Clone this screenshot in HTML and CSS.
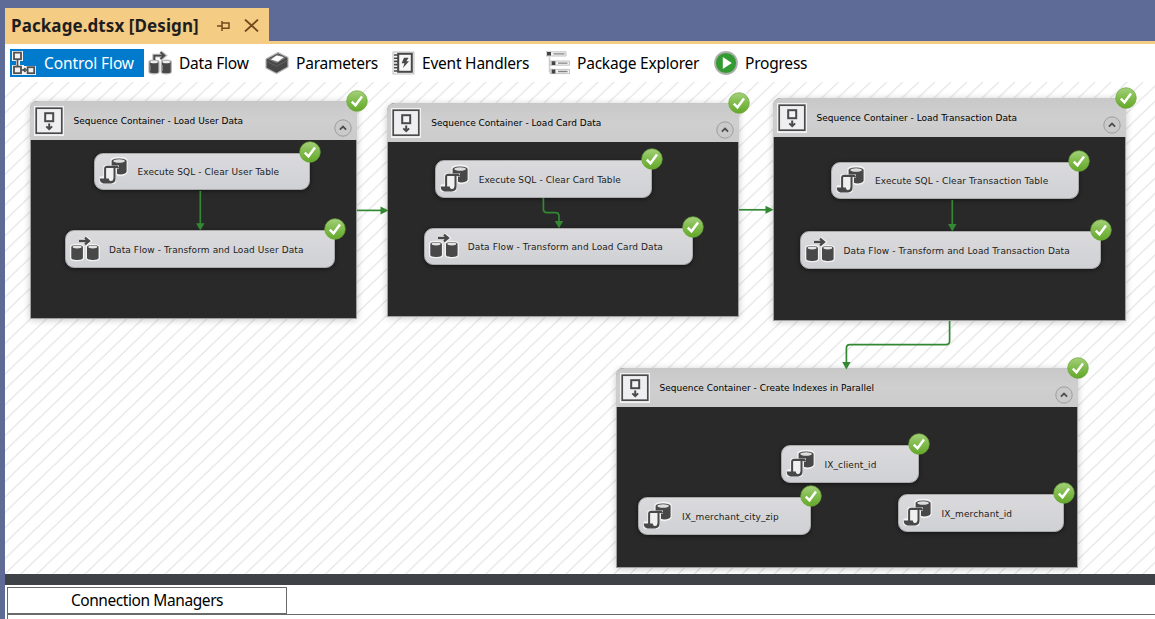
FILE: index.html
```html
<!DOCTYPE html>
<html lang="en">
<head>
<meta charset="utf-8">
<title>Package.dtsx [Design]</title>
<link rel="stylesheet" href="styles.css">
</head>
<body>
<svg class="defs" width="0" height="0" aria-hidden="true">
  <defs>
    <linearGradient id="greenFill" x1="0" y1="0" x2="0" y2="1">
      <stop offset="0" stop-color="#a5d07c"/><stop offset=".45" stop-color="#83bd4f"/><stop offset="1" stop-color="#64a82a"/>
    </linearGradient>
    <symbol id="check" viewBox="0 0 22 22">
      <circle cx="11" cy="11" r="10.3" fill="url(#greenFill)" stroke="#68a536" stroke-width=".7"/>
      <path d="M5.8 11.6L9.5 15.3L16 6.6" fill="none" stroke="#fff" stroke-width="2.5"/>
    </symbol>
    <symbol id="sequence" viewBox="0 0 30 30">
      <rect x="0" y="0" width="30" height="30" fill="#f2f2f4"/>
      <rect x="2.2" y="2.2" width="25.6" height="25" fill="#efeff1" stroke="#4a4a4a" stroke-width="1.7"/>
      <rect x="11.2" y="7.2" width="8" height="8" fill="#f3f3f5" stroke="#4a4a4a" stroke-width="2"/>
      <path d="M15.2 17.6V23M12.3 20.4L15.2 23.2L18.1 20.4" fill="none" stroke="#4a4a4a" stroke-width="2"/>
    </symbol>
    <symbol id="sql" viewBox="0 0 30 30">
      <g fill="#f3f3f3" stroke="#f3f3f3" stroke-width="3.4" stroke-linejoin="round">
        <path d="M13 4.6C13 1.8 27 1.8 27 4.6V16C25 19 20 18.6 19 18V12H13Z"/>
        <path d="M6 11H18V13H15V26H2V22H6Z"/>
      </g>
      <path d="M12.6 5C12.6 1.6 27.6 1.6 27.6 5V15.8C26.6 18.6 20.5 19.2 18 17.8V13H20V9.4H12.6Z" fill="#484848"/>
      <ellipse cx="20.1" cy="5" rx="5.8" ry="1.7" fill="#dedede"/>
      <path d="M6.2 23.4V12.8Q6.2 10.8 8.4 10.8H17.4Q19 10.8 19 12.6M15.4 12V22.4Q15.4 26 12 26.2" fill="none" stroke="#484848" stroke-width="2.2"/>
      <path d="M7.4 12H14.3V22.6H7.4Z" fill="#f0f0f0"/>
      <path d="M0.8 22.6H9.8Q9.8 25 12.8 25.6L12.4 27.4H4.4Q0.8 27 0.8 22.6Z" fill="#484848"/>
    </symbol>
    <symbol id="cylinders" viewBox="0 0 30 26">
      <g stroke="#f2f2f2" stroke-width="2.6" fill="#f2f2f2">
        <path d="M1.3 11C1.3 8.5 12.9 8.5 12.9 11V22C12.9 24.6 1.3 24.6 1.3 22Z"/>
        <path d="M17 11C17 8.5 28.6 8.5 28.6 11V22C28.6 24.6 17 24.6 17 22Z"/>
        <path d="M9 5H19M15 1.8L19 5L15 8.2" fill="none" stroke-width="4.6"/>
      </g>
      <path d="M1.3 11C1.3 8.3 12.9 8.3 12.9 11V22C12.9 24.6 1.3 24.6 1.3 22ZM17 11C17 8.3 28.6 8.3 28.6 11V22C28.6 24.6 17 24.6 17 22Z" fill="#484848"/>
      <ellipse cx="7.1" cy="11" rx="4.5" ry="1.4" fill="#e4e4e4"/>
      <ellipse cx="22.8" cy="11" rx="4.5" ry="1.4" fill="#e4e4e4"/>
      <path d="M9 5H19M15 1.6L19 5L15 8.4" fill="none" stroke="#484848" stroke-width="2.3"/>
    </symbol>
    <symbol id="collapse" viewBox="0 0 18 18">
      <circle cx="9" cy="9" r="8.2" fill="#cacaca" stroke="#979797" stroke-width=".9"/>
      <path d="M5.9 10.6L9 7.6L12.1 10.6" fill="none" stroke="#4d4d4d" stroke-width="1.8"/>
    </symbol>
  </defs>
</svg>

<div class="window">
  <header class="tabstrip">
    <div class="doc-tab">
      <span class="doc-title">Package.dtsx [Design]</span>
      <svg class="pin" viewBox="0 0 13 10"><path d="M0 5H5M5 0V10M5 2H12V7.4M5 7.2H12.6" fill="none" stroke="#75481c" stroke-width="1.5"/></svg>
      <svg class="close" viewBox="0 0 15 13"><path d="M1 .6L14 12.4M14 .6L1 12.4" fill="none" stroke="#75481c" stroke-width="1.9"/></svg>
    </div>
  </header>

  <main class="designer">
    <nav class="views">
      <a class="view active">
        <svg viewBox="0 0 24 24">
          <path d="M0 0H11V10H8V14H12V15H24V24H0V14H4V10H0Z" fill="#f5f5f5"/>
          <g fill="#f0f0f0" stroke="#505050" stroke-width="1.8"><rect x="2" y="1.6" width="7" height="6.6"/><rect x="2" y="15.6" width="7" height="6.6"/><rect x="15.6" y="16.2" width="6.6" height="6"/></g>
          <path d="M5.5 8V15M9 19H15.5M13.5 17L11.5 19L13.5 21" fill="none" stroke="#505050" stroke-width="1.7"/>
        </svg>
        <span>Control Flow</span>
      </a>
      <a class="view">
        <svg viewBox="0 0 24 24">
          <g stroke="#b9b9b9" stroke-width="1.2" fill="#484848">
            <path d="M1 11C1 8.6 11 8.6 11 11V21C11 23.4 1 23.4 1 21ZM13.3 11C13.3 8.6 23.3 8.6 23.3 11V21C23.3 23.4 13.3 23.4 13.3 21Z"/>
          </g>
          <path d="M2 14V20M14.3 14V20" stroke="#888" stroke-width="1.2"/>
          <ellipse cx="6" cy="11" rx="4" ry="1.3" fill="#eee"/><ellipse cx="18.3" cy="11" rx="4" ry="1.3" fill="#eee"/>
          <path d="M6 9V4.6H16M12.5 .8L17 4.6L12.5 8.4" fill="none" stroke="#c3c3c3" stroke-width="3.6"/>
          <path d="M6.3 9V4.6H16M12.5 1.2L16.4 4.6L12.5 8" fill="none" stroke="#484848" stroke-width="1.9"/>
        </svg>
        <span>Data Flow</span>
      </a>
      <a class="view">
        <svg viewBox="0 0 24 24">
          <path d="M1 8L13 1.6L23 6.5V16L11.5 22.5L1 17Z" fill="#484848" stroke="#b5b5b5" stroke-width="1.2" stroke-linejoin="round"/>
          <path d="M3 8.4L13 3.2L21 7L11.6 12.2Z" fill="#777"/>
          <path d="M6 8.4L11.6 4.4L18.8 6L13 10.8Z" fill="#fff"/>
          <path d="M1.6 10.4L11.5 15.2L22.5 9.4" fill="none" stroke="#636363" stroke-width="1"/>
        </svg>
        <span>Parameters</span>
      </a>
      <a class="view">
        <svg viewBox="0 0 24 24">
          <rect x="2" y="1" width="21" height="22" fill="#f4f4f4" stroke="#c2c2c2"/>
          <rect x="7.2" y="2.8" width="13.6" height="18" fill="#f6f6f6" stroke="#484848" stroke-width="2"/>
          <path d="M3 4H7M3 7.2H7M3 10.4H7M3 13.6H7M3 16.8H7M3 20H7" stroke="#484848" stroke-width="1.6"/>
          <path d="M13 6.8H17.6L15.4 10.2H18L12 17L13.4 12.2H10.6Z" fill="#484848"/>
        </svg>
        <span>Event Handlers</span>
      </a>
      <a class="view">
        <svg viewBox="0 0 24 24">
          <path d="M3.5 6V21M3.5 12H7M3.5 20.5H7" stroke="#cfcfcf" stroke-width="1.5" fill="none"/>
          <path d="M0 .8H20V5H0ZM4 10H23.5V14.2H4ZM4 18.4H23.5V22.6H4Z" fill="#f2f2f2" stroke="#bdbdbd" stroke-width=".9"/>
          <path d="M1 1H5V4.6H1ZM5.6 10.2H9.4V14H5.6ZM5.6 18.6H9.4V22.4H5.6Z" fill="#444"/>
          <path d="M7.5 2.9H18.5M12 12.1H21.5M12 20.5H21.5" stroke="#848484" stroke-width="1.4"/>
        </svg>
        <span>Package Explorer</span>
      </a>
      <a class="view">
        <svg viewBox="0 0 24 24">
          <circle cx="12" cy="12" r="11" fill="#349b32" stroke="#adb0ad" stroke-width="1.8"/>
          <path d="M8.8 6L17.8 12L8.8 18Z" fill="#fff"/>
        </svg>
        <span>Progress</span>
      </a>
    </nav>

    <section class="canvas">
      <svg class="hatch" width="1150" height="492">
        <defs><pattern id="stripes" width="16.03" height="15.37" patternUnits="userSpaceOnUse">
          <path d="M-1 16.33L17.03 -.96M-1 .96L1 -.96M15.03 16.33L17.03 14.41" stroke="#e2e2e2" stroke-width="1.2"/>
        </pattern></defs>
        <rect width="1150" height="492" fill="url(#stripes)"/>
      </svg>

      <div class="container user">
        <div class="head"><svg class="seq"><use href="#sequence"/></svg><span>Sequence Container - Load User Data</span><svg class="fold"><use href="#collapse"/></svg></div>
        <svg class="badge"><use href="#check"/></svg>
      </div>
      <div class="container card">
        <div class="head"><svg class="seq"><use href="#sequence"/></svg><span>Sequence Container - Load Card Data</span><svg class="fold"><use href="#collapse"/></svg></div>
        <svg class="badge"><use href="#check"/></svg>
      </div>
      <div class="container transaction">
        <div class="head"><svg class="seq"><use href="#sequence"/></svg><span>Sequence Container - Load Transaction Data</span><svg class="fold"><use href="#collapse"/></svg></div>
        <svg class="badge"><use href="#check"/></svg>
      </div>
      <div class="container indexes">
        <div class="head"><svg class="seq"><use href="#sequence"/></svg><span>Sequence Container - Create Indexes in Parallel</span><svg class="fold"><use href="#collapse"/></svg></div>
        <svg class="badge"><use href="#check"/></svg>
      </div>

      <div class="task user-sql"><svg class="glyph"><use href="#sql"/></svg><span>Execute SQL - Clear User Table</span><svg class="badge"><use href="#check"/></svg></div>
      <div class="task user-flow"><svg class="glyph"><use href="#cylinders"/></svg><span>Data Flow - Transform and Load User Data</span><svg class="badge"><use href="#check"/></svg></div>
      <div class="task card-sql"><svg class="glyph"><use href="#sql"/></svg><span>Execute SQL - Clear Card Table</span><svg class="badge"><use href="#check"/></svg></div>
      <div class="task card-flow"><svg class="glyph"><use href="#cylinders"/></svg><span>Data Flow - Transform and Load Card Data</span><svg class="badge"><use href="#check"/></svg></div>
      <div class="task trans-sql"><svg class="glyph"><use href="#sql"/></svg><span>Execute SQL - Clear Transaction Table</span><svg class="badge"><use href="#check"/></svg></div>
      <div class="task trans-flow"><svg class="glyph"><use href="#cylinders"/></svg><span>Data Flow - Transform and Load Transaction Data</span><svg class="badge"><use href="#check"/></svg></div>
      <div class="task ix-client"><svg class="glyph"><use href="#sql"/></svg><span>IX_client_id</span><svg class="badge"><use href="#check"/></svg></div>
      <div class="task ix-zip"><svg class="glyph"><use href="#sql"/></svg><span>IX_merchant_city_zip</span><svg class="badge"><use href="#check"/></svg></div>
      <div class="task ix-merchant"><svg class="glyph"><use href="#sql"/></svg><span>IX_merchant_id</span><svg class="badge"><use href="#check"/></svg></div>

      <svg class="edges" width="1150" height="492" viewBox="5 82 1150 492">
        <g fill="none" stroke="#338833" stroke-width="1.7">
          <path d="M200.3 191V224"/>
          <path d="M357 210.4H381"/>
          <path d="M739 209.8H766"/>
          <path d="M543.4 198V209Q543.4 212.6 547 212.6H555.4Q559 212.6 559 216.2V222"/>
          <path d="M952.3 200V225"/>
          <path d="M949.6 321V341Q949.6 344.6 946 344.6H850Q846.4 344.6 846.4 348.2V363"/>
        </g>
        <g fill="#338833">
          <path d="M196.1 223.3H204.5L200.3 230.5Z"/>
          <path d="M380.5 206.4V214.4L388.6 210.4Z"/>
          <path d="M765.5 205.8V213.8L773.6 209.8Z"/>
          <path d="M554.8 221H563.2L559 228.2Z"/>
          <path d="M948.1 224H956.5L952.3 231.4Z"/>
          <path d="M842.2 362H850.6L846.4 369.4Z"/>
        </g>
      </svg>
    </section>

    <div class="splitter"></div>

    <section class="connections">
      <div class="conn-tab">Connection Managers</div>
      <div class="conn-body"></div>
    </section>
  </main>
</div>
</body>
</html>
```
FILE: styles.css
```css
* { box-sizing: border-box; }
body {
  margin: 0;
  background: #5e6b97;
  font-family: "DejaVu Sans", sans-serif;
  color: #000;
}
svg { display: block; flex: none; }
.defs { position: absolute; }
.window {
  width: 1155px;
  height: 619px;
  overflow: hidden;
  padding-left: 5px;
  display: flex;
  flex-direction: column;
}

.tabstrip {
  height: 44px;
  flex: none;
  padding-top: 8px;
  border-bottom: 3px solid #f5cc84;
}
.doc-tab {
  width: 264px;
  height: 33px;
  padding: 2px 0 0 6px;
  background: #f5cc84;
  display: flex;
  align-items: center;
}
.doc-title {
  width: 206px;
  font: bold 17px/24px "Noto Sans", sans-serif;
  letter-spacing: 0.08px;
  color: #1e1e1e;
  white-space: nowrap;
}
.pin { width: 13px; height: 10px; }
.close { width: 15px; height: 13px; margin-left: 14px; }

.designer {
  flex: 1;
  background: #fff;
  display: flex;
  flex-direction: column;
  min-height: 0;
}
.views {
  height: 38px;
  flex: none;
  padding: 5px 0 0 5px;
  display: grid;
  grid-template-columns: 137px 117px 126px 155px 168px 120px;
  align-items: start;
}
.view {
  height: 28px;
  display: flex;
  align-items: center;
  gap: 7px;
  padding-left: 1px;
  font-family: "Noto Sans", sans-serif;
  font-size: 15.5px;
  letter-spacing: -0.22px;
  white-space: nowrap;
}
.view svg { width: 24px; height: 24px; }
.view span { line-height: 26px; padding-bottom: 1px; }
.view.active {
  width: 134px;
  padding-left: 2px;
  gap: 8px;
  background: #007acc;
  color: #fff;
  letter-spacing: -0.1px;
}

.canvas {
  position: relative;
  height: 492px;
  flex: none;
  overflow: hidden;
  background: #fff;
  font-size: 9px;
}
.hatch, .edges { position: absolute; inset: 0; }

.container {
  position: absolute;
  background: #292929;
  border: 1.5px solid #a0a0a0;
  border-top: 0;
  border-radius: 8px 8px 0 0;
  box-shadow: 0 1px 7px rgba(0, 0, 0, .22);
}
.head {
  height: 39px;
  margin: 0 -1px;
  padding: 0 5px 0 4px;
  display: flex;
  align-items: center;
  background: linear-gradient(#c8c8c8, #cfcfcf 50%, #cbcbcb);
  border-radius: 8px 8px 0 0;
  white-space: nowrap;
}
.head span { margin-left: 10px; flex: 1; line-height: 14px; padding-top: 1px; }
.seq { width: 30px; height: 30px; }
.fold { width: 18px; height: 18px; margin-top: 15px; }
.badge {
  position: absolute;
  top: -11px;
  right: -12px;
  width: 22px;
  height: 22px;
}

.user { left: 24.5px; top: 19px; width: 327.5px; height: 218px; }
.card { left: 382.3px; top: 21.3px; width: 351.7px; height: 214.2px; }
.transaction { left: 767.5px; top: 16px; width: 353.7px; height: 222.5px; }
.indexes { left: 610.5px; top: 286px; width: 462.2px; height: 200.3px; }

.task {
  position: absolute;
  height: 37.5px;
  padding-left: 4px;
  display: flex;
  align-items: center;
  gap: 10px;
  border: 1px solid #aaa;
  border-radius: 9px;
  background: linear-gradient(#dadadd, #d0d1d4);
  box-shadow: 0 1px 4px rgba(0, 0, 0, .5);
  color: #1c1c1c;
  letter-spacing: .1px;
  white-space: nowrap;
}
.task span { line-height: 14px; padding-top: 2px; }
.task .badge { top: -13px; }
.glyph { width: 30px; height: 30px; margin-right: -1px; }

.user-sql { left: 88.5px; top: 70.5px; width: 216px; }
.user-flow { left: 60px; top: 148.3px; width: 269.5px; }
.card-sql { left: 429.7px; top: 78px; width: 217px; }
.card-flow { left: 418.8px; top: 145.5px; width: 269.5px; }
.trans-sql { left: 826px; top: 79.5px; width: 248px; }
.trans-flow { left: 794.5px; top: 149.3px; width: 301.5px; }
.ix-client { left: 775.5px; top: 363px; width: 138px; }
.ix-zip { left: 633px; top: 415.3px; width: 172.5px; }
.ix-merchant { left: 892.5px; top: 412px; width: 166px; }

.splitter { height: 11px; flex: none; background: #3f4347; }
.connections { flex: 1; padding: 2px 0 0 2px; }
.conn-tab {
  width: 280px;
  height: 27px;
  border: 1px solid #6a6a6a;
  font-family: "Noto Sans", sans-serif;
  font-size: 15.5px;
  line-height: 24px;
  letter-spacing: -0.42px;
  text-align: center;
}
.conn-body { height: 10px; border: 1px solid #6a6a6a; border-width: 1px 0 0 1px; }
```
